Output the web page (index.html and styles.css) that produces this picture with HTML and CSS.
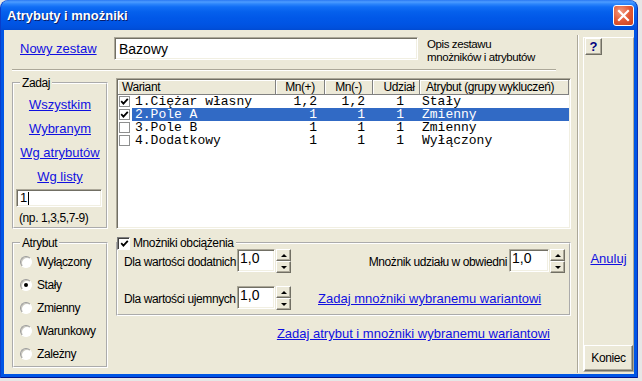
FILE: index.html
```html
<!DOCTYPE html>
<html lang="pl">
<head>
    <meta charset="UTF-8">
    <meta name="viewport" content="width=device-width, initial-scale=1.0">
    <title>Atrybuty i mnożniki</title>
    <link rel="stylesheet" href="styles.css">
</head>
<body>
    <div class="window">
        <div class="titlebar">
            <span class="title">Atrybuty i mnożniki</span>
            <span class="close">
                <svg width="13" height="13" viewBox="0 0 13 13"><path d="M2 2 L11 11 M11 2 L2 11" stroke="#fff" stroke-width="2.2" stroke-linecap="square"/></svg>
            </span>
        </div>

        <div class="client">
            <div class="main">
                <div class="set-row">
                    <a class="link new-set" href="#">Nowy zestaw</a>
                    <div class="field set-name">Bazowy</div>
                    <div class="set-desc">Opis zestawu<br>mnożników i atrybutów</div>
                </div>
                <div class="hsep"></div>

                <div class="mid-row">
                    <fieldset class="group zadaj">
                        <legend>Zadaj</legend>
                        <a class="link block-link" href="#">Wszystkim</a>
                        <a class="link block-link" href="#">Wybranym</a>
                        <a class="link block-link" href="#">Wg atrybutów</a>
                        <a class="link block-link" href="#">Wg listy</a>
                        <div class="field list-input">1<span class="caret"></span></div>
                        <div class="hint">(np. 1,3,5,7-9)</div>
                    </fieldset>

                    <div class="listview">
                        <div class="lv-head">
                            <div class="h-col h-name">Wariant</div>
                            <div class="h-col h-mn1">Mn(+)</div>
                            <div class="h-col h-mn2">Mn(-)</div>
                            <div class="h-col h-udz">Udział</div>
                            <div class="h-col h-atr">Atrybut (grupy wykluczeń)</div>
                        </div>
                        <div class="lv-row">
                            <span class="lv-check"><svg width="9" height="9" viewBox="0 0 9 9"><path d="M1.2 4.2 L3.4 6.6 L7.8 1.8" stroke="#000" stroke-width="1.8" fill="none"/></svg></span>
                            <div class="lv-cells">
                                <span class="v-name">1.Ciężar własny</span>
                                <span class="v-mn1">1,2</span>
                                <span class="v-mn2">1,2</span>
                                <span class="v-udz">1</span>
                                <span class="v-atr">Stały</span>
                            </div>
                        </div>
                        <div class="lv-row">
                            <span class="lv-check"><svg width="9" height="9" viewBox="0 0 9 9"><path d="M1.2 4.2 L3.4 6.6 L7.8 1.8" stroke="#000" stroke-width="1.8" fill="none"/></svg></span>
                            <div class="lv-cells selected">
                                <span class="v-name">2.Pole A</span>
                                <span class="v-mn1">1</span>
                                <span class="v-mn2">1</span>
                                <span class="v-udz">1</span>
                                <span class="v-atr">Zmienny</span>
                            </div>
                        </div>
                        <div class="lv-row">
                            <span class="lv-check"></span>
                            <div class="lv-cells">
                                <span class="v-name">3.Pole B</span>
                                <span class="v-mn1">1</span>
                                <span class="v-mn2">1</span>
                                <span class="v-udz">1</span>
                                <span class="v-atr">Zmienny</span>
                            </div>
                        </div>
                        <div class="lv-row">
                            <span class="lv-check"></span>
                            <div class="lv-cells">
                                <span class="v-name">4.Dodatkowy</span>
                                <span class="v-mn1">1</span>
                                <span class="v-mn2">1</span>
                                <span class="v-udz">1</span>
                                <span class="v-atr">Wyłączony</span>
                            </div>
                        </div>
                    </div>
                </div>

                <div class="bottom-row">
                    <fieldset class="group atrybut">
                        <legend>Atrybut</legend>
                        <div class="radio-row"><span class="radio"></span>Wyłączony</div>
                        <div class="radio-row"><span class="radio checked"></span>Stały</div>
                        <div class="radio-row"><span class="radio"></span>Zmienny</div>
                        <div class="radio-row"><span class="radio"></span>Warunkowy</div>
                        <div class="radio-row"><span class="radio"></span>Zależny</div>
                    </fieldset>

                    <div class="right-col">
                        <fieldset class="group mnozniki">
                            <legend class="check-legend">
                                <span class="checkbox"><svg width="9" height="9" viewBox="0 0 9 9"><path d="M1.2 4.2 L3.4 6.6 L7.8 1.8" stroke="#000" stroke-width="1.8" fill="none"/></svg></span>
                                Mnożniki obciążenia
                            </legend>
                            <div class="mrow mrow-a">
                                <span class="m-label">Dla wartości dodatnich</span>
                                <div class="field num">1,0</div>
                                <div class="spin"><span class="spin-btn"><i class="arrow-up"></i></span><span class="spin-btn"><i class="arrow-down"></i></span></div>
                                <span class="spacer"></span>
                                <span class="m-label-r">Mnożnik udziału w obwiedni</span>
                                <div class="field num wide">1,0</div>
                                <div class="spin"><span class="spin-btn"><i class="arrow-up"></i></span><span class="spin-btn"><i class="arrow-down"></i></span></div>
                            </div>
                            <div class="mrow mrow-b">
                                <span class="m-label">Dla wartości ujemnych</span>
                                <div class="field num">1,0</div>
                                <div class="spin"><span class="spin-btn"><i class="arrow-up"></i></span><span class="spin-btn"><i class="arrow-down"></i></span></div>
                                <a class="link m-link" href="#">Zadaj mnożniki wybranemu wariantowi</a>
                            </div>
                        </fieldset>
                        <div class="all-link"><a class="link" href="#">Zadaj atrybut i mnożniki wybranemu wariantowi</a></div>
                    </div>
                </div>
            </div>

            <div class="side">
                <div class="groove"></div>
                <div class="panel">
                    <span class="btn help">?</span>
                    <a class="link cancel" href="#">Anuluj</a>
                    <span class="btn finish">Koniec</span>
                </div>
            </div>
        </div>
    </div>
</body>
</html>
```

FILE: styles.css
```css
* {
    box-sizing: border-box;
}

body {
    margin: 0;
    background: #e6e6e6;
    font-family: "Liberation Sans", Arial, sans-serif;
    font-size: 12px;
    letter-spacing: -0.4px;
    color: #000;
}

/* window frame */
.window {
    width: 638px;
    height: 378px;
    display: flex;
    flex-direction: column;
    padding: 0 4px 4px;
    border-radius: 8px 8px 0 0;
    background:
        linear-gradient(to bottom, #2a78f2 0, #4d9cff 2px, #2c85fb 4px, #106df5 7px, #0560ec 12px, #0158e8 18px, #0054e3 24px, #0050dc 28px, #004bd2 30px) top / 100% 30px no-repeat,
        #0055e5;
    box-shadow: inset 1px 0 0 #0a3dca, inset -1px 0 0 #0a2fb0, inset 0 -1px 0 #00138c;
}

.titlebar {
    height: 30px;
    display: flex;
    align-items: center;
    justify-content: space-between;
    padding-left: 3px;
}

.title {
    color: #fff;
    font-weight: bold;
    font-size: 13px;
    letter-spacing: 0;
    text-shadow: 1px 1px 0 #0a1e6a;
}

.close {
    width: 21px;
    height: 21px;
    margin-top: 1px;
    border: 1px solid #fff;
    border-radius: 3px;
    background: radial-gradient(circle at 35% 30%, #f29b80 0, #e35a36 50%, #c9401c 100%);
    display: flex;
    align-items: center;
    justify-content: center;
}

.client {
    flex: 1;
    display: flex;
    background: #ece9d8;
}

.main {
    width: 573px;
    padding: 7px 0 0 8px;
}

/* links */
.link {
    color: #1010e0;
    text-decoration: underline;
    font-size: 13px;
    letter-spacing: 0;
    line-height: 15px;
}

.block-link {
    display: block;
    width: 100%;
    line-height: 24px;
    text-align: center;
}

/* sunken edit field */
.field {
    background: #fff;
    border: 1px solid;
    border-color: #aca899 #fff #fff #aca899;
    box-shadow: inset 1px 1px 0 #716f64, inset -1px -1px 0 #f1efe2;
}

/* top row */
.set-row {
    display: flex;
    align-items: flex-start;
    height: 23px;
}

.new-set {
    width: 94px;
    margin: 4px 0 0 8px;
}

.set-name {
    width: 304px;
    height: 23px;
    padding: 3px 4px;
    font-size: 14px;
    line-height: 16px;
    letter-spacing: 0;
}

.set-desc {
    margin: 1px 0 0 9px;
    font-size: 11.5px;
    line-height: 13px;
}

.hsep {
    width: 544px;
    height: 2px;
    margin-top: 9px;
    border-top: 1px solid #aca899;
    border-bottom: 1px solid #fff;
}

/* group boxes */
.group {
    margin: 0;
    padding: 0 2px;
    min-width: 0;
    border: 2px groove #fff;
}

.group legend {
    margin-left: 4px;
    padding: 0 2px;
    line-height: 14px;
}

.mid-row {
    display: flex;
    margin-top: 5px;
    height: 153px;
}

.zadaj {
    width: 96px;
    height: 153px;
    padding-top: 3px;
}

.list-input {
    width: 86px;
    height: 18px;
    padding: 1px 3px;
    font-size: 13px;
    line-height: 14px;
    letter-spacing: 0;
    display: flex;
    align-items: center;
}

.caret {
    display: inline-block;
    width: 1px;
    height: 13px;
    margin-left: 1px;
    background: #000;
}

.hint {
    margin-top: 3px;
    padding-left: 3px;
    line-height: 16px;
}

/* list view */
.listview {
    width: 455px;
    height: 151px;
    margin: 2px 0 0 8px;
    background: #fff;
    border: 1px solid;
    border-color: #aca899 #fff #fff #aca899;
    box-shadow: inset 1px 1px 0 #716f64, inset -1px -1px 0 #f1efe2;
    padding: 1px;
}

.lv-head {
    display: flex;
    height: 15px;
    background: #ece9d8;
}

.h-col {
    height: 15px;
    line-height: 14px;
    border-right: 1px solid #808080;
    border-bottom: 1px solid #808080;
    box-shadow: inset 1px 1px 0 #fff;
    white-space: nowrap;
    overflow: hidden;
}

.h-name { width: 158px; padding-left: 4px; }
.h-mn1 { width: 49px; text-align: center; }
.h-mn2 { width: 48px; text-align: center; }
.h-udz { width: 47px; text-align: center; padding-left: 6px; }
.h-atr { width: 149px; padding-left: 6px; }

.lv-row {
    display: flex;
    height: 13px;
    font-family: "Liberation Mono", "Courier New", monospace;
    font-size: 13px;
    letter-spacing: 0;
    line-height: 13px;
}

.lv-check {
    width: 11px;
    height: 11px;
    margin: 1px 2px 0 1px;
    border: 1px solid #8e8f8f;
    background: #fff;
    display: flex;
    align-items: center;
    justify-content: center;
}

.lv-cells {
    flex: 1;
    display: flex;
    white-space: pre;
}

.lv-cells.selected {
    background: #316ac5;
    color: #fff;
}

.v-name { width: 144px; padding-left: 3px; }
.v-mn1 { width: 49px; text-align: right; padding-right: 8px; }
.v-mn2 { width: 48px; text-align: right; padding-right: 8px; }
.v-udz { width: 47px; text-align: right; padding-right: 16px; }
.v-atr { padding-left: 2px; }

/* bottom part */
.bottom-row {
    display: flex;
    margin-top: 7px;
}

.atrybut {
    width: 96px;
    height: 132px;
}

.radio-row {
    height: 23px;
    display: flex;
    align-items: center;
    padding-left: 4px;
}

.radio {
    width: 12px;
    height: 12px;
    margin-right: 5px;
    border-radius: 50%;
    background: #fff;
    border: 1px solid;
    border-color: #9a9a9a #fff #fff #9a9a9a;
    box-shadow: inset 1px 1px 0 #c8c6bc;
    display: flex;
    align-items: center;
    justify-content: center;
}

.radio.checked::after {
    content: "";
    width: 4px;
    height: 4px;
    border-radius: 50%;
    background: #000;
}

.right-col {
    width: 455px;
    margin-left: 8px;
    display: flex;
    flex-direction: column;
}

.mnozniki {
    height: 80px;
    padding: 0;
}

.mnozniki .check-legend {
    margin-left: -1px;
    padding: 0 3px 0 0;
    display: flex;
    align-items: center;
}

.checkbox {
    width: 13px;
    height: 13px;
    margin-right: 3px;
    background: #fff;
    border: 1px solid;
    border-color: #808080 #fff #fff #808080;
    box-shadow: inset 1px 1px 0 #404040;
    display: flex;
    align-items: center;
    justify-content: center;
    padding: 1px 0 0 1px;
}

.mrow {
    display: flex;
    align-items: flex-start;
    padding: 0 4px 0 6px;
}

.mrow-a {
    margin-top: -1px;
    height: 24px;
}

.mrow-b {
    margin-top: 13px;
    height: 24px;
}

.m-label {
    width: 113px;
    padding-top: 6px;
    line-height: 14px;
    white-space: nowrap;
}

.m-label-r {
    padding-top: 6px;
    margin-right: 2px;
    line-height: 14px;
}

.spacer {
    flex: 1;
}

.num {
    width: 38px;
    height: 23px;
    padding: 0 2px;
    font-size: 14px;
    line-height: 17px;
    letter-spacing: 0;
}

.num.wide {
    width: 40px;
}

.spin {
    width: 15px;
    height: 24px;
    margin-left: 1px;
    display: flex;
    flex-direction: column;
}

.spin-btn {
    height: 12px;
    background: #ece9d8;
    border: 1px solid;
    border-color: #fff #716f64 #716f64 #fff;
    box-shadow: inset -1px -1px 0 #aca899;
    display: flex;
    align-items: center;
    justify-content: center;
}

.arrow-up {
    width: 0;
    height: 0;
    border-left: 3px solid transparent;
    border-right: 3px solid transparent;
    border-bottom: 3px solid #000;
}

.arrow-down {
    width: 0;
    height: 0;
    border-left: 3px solid transparent;
    border-right: 3px solid transparent;
    border-top: 3px solid #000;
}

.m-link {
    margin: 5px 0 0 27px;
    white-space: nowrap;
}

.all-link {
    margin-top: 10px;
    padding-right: 21px;
    text-align: right;
}

/* right side panel */
.side {
    display: flex;
}

.groove {
    width: 2px;
    margin: 5px 0 1px;
    border-left: 1px solid #aca899;
    border-right: 1px solid #fff;
}

.panel {
    width: 51px;
    margin: 7px 0 2px 4px;
    border: 1px solid;
    border-color: #fff #aca899 #aca899 #fff;
    display: flex;
    flex-direction: column;
}

.btn {
    background: #ece9d8;
    border: 1px solid;
    border-color: #fff #716f64 #716f64 #fff;
    box-shadow: inset -1px -1px 0 #aca899;
    display: flex;
    align-items: center;
    justify-content: center;
}

.help {
    width: 17px;
    height: 17px;
    margin-left: 1px;
    color: #000080;
    font-weight: bold;
    font-size: 13px;
    letter-spacing: 0;
}

.cancel {
    margin-top: 196px;
    text-align: center;
}

.finish {
    margin-top: auto;
    height: 26px;
}
```
